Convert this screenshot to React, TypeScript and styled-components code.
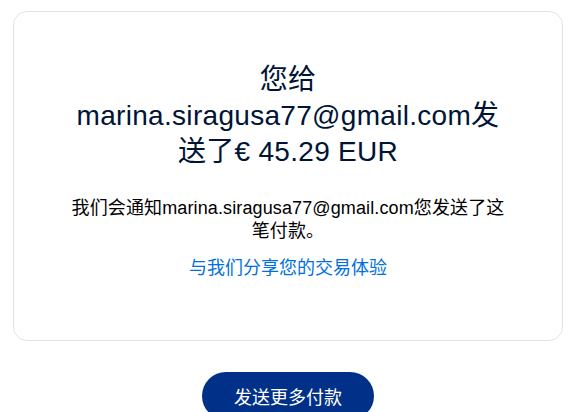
import React from "react";
import styled, { createGlobalStyle } from "styled-components";

const Global = createGlobalStyle`
  html, body { margin: 0; padding: 0; background: #ffffff; }
  body { font-family: "Liberation Sans", Arial, "Noto Sans CJK SC", sans-serif; }
`;

const Page = styled.div`
  display: flex;
  flex-direction: column;
  align-items: center;
  padding: 11px 10px 0 13px;
`;

const Card = styled.section`
  box-sizing: border-box;
  width: 100%;
  border: 1px solid #e2e2e2;
  border-radius: 14px;
  padding: 50px 55px 60px;
  display: flex;
  flex-direction: column;
  align-items: center;
  text-align: center;
`;

const Title = styled.h1`
  margin: 0;
  font-size: 28px;
  line-height: 36px;
  font-weight: 400;
  letter-spacing: 0.3px;
  color: #001435;
`;

const Message = styled.p`
  margin: 27px 0 0;
  font-size: 18px;
  line-height: 23px;
  letter-spacing: 0.12px;
  color: #000000;
`;

const Link = styled.a`
  margin-top: 13px;
  font-size: 18px;
  line-height: 24px;
  color: #0070e0;
  text-decoration: none;
`;

const Button = styled.button`
  margin-top: 31px;
  height: 48px;
  padding: 0 32px;
  border: none;
  border-radius: 24px;
  background: #003087;
  color: #ffffff;
  font-family: inherit;
  font-size: 18px;
`;

export default function App() {
  return (
    <>
      <Global />
      <Page>
        <Card>
          <Title>您给marina.siragusa77@gmail.com发送了€ 45.29 EUR</Title>
          <Message>我们会通知marina.siragusa77@gmail.com您发送了这笔付款。</Message>
          <Link href="#">与我们分享您的交易体验</Link>
        </Card>
        <Button>发送更多付款</Button>
      </Page>
    </>
  );
}
